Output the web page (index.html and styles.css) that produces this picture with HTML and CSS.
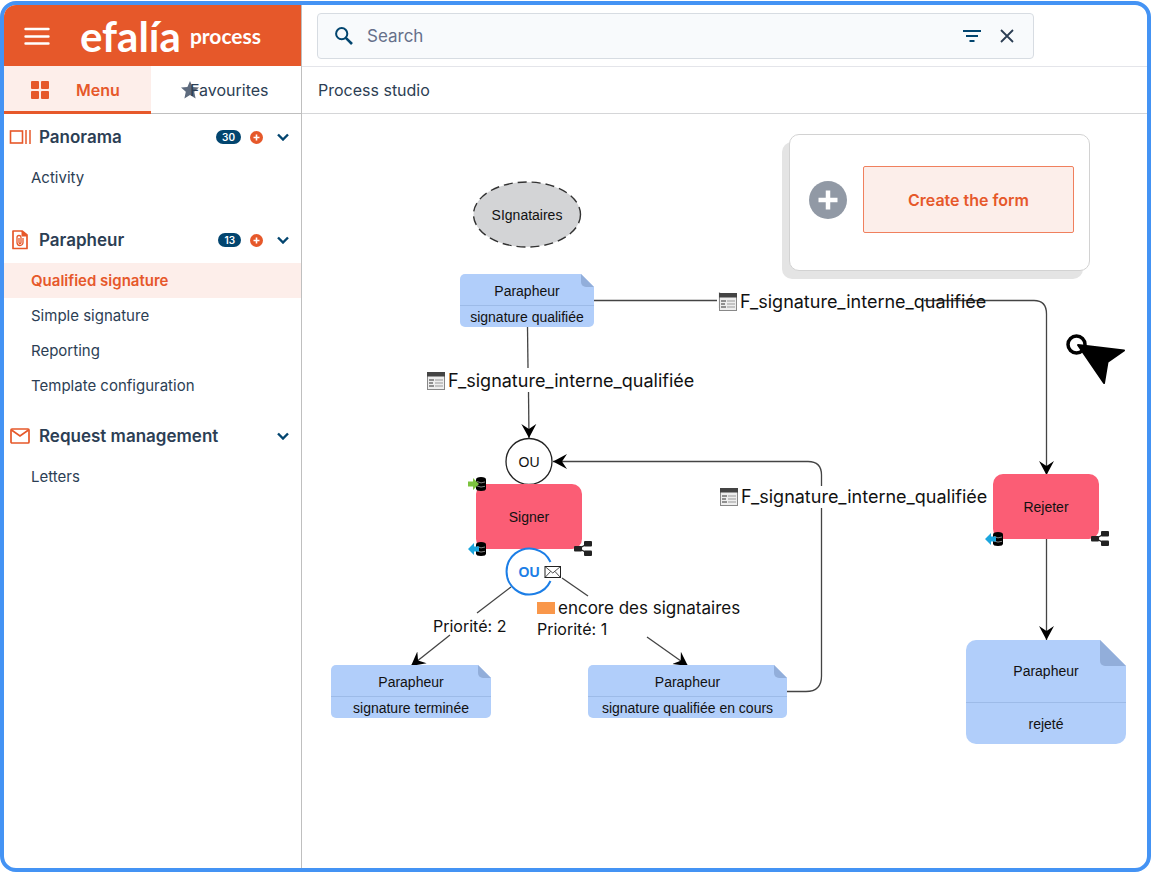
FILE: index.html
```html
<!DOCTYPE html>
<html lang="en">
<head>
  <meta charset="UTF-8">
  <title>efalia process</title>
  <link rel="stylesheet" href="styles.css">
</head>
<body>

<div class="window">
  <aside class="sidebar">
    <header class="brand">
      <button class="burger" aria-label="Open menu">
        <svg width="26" height="18" viewBox="0 0 26 18"><path d="M1.500 2H24.500M1.500 9.500H24.500M1.500 16.500H24.500" stroke="#fff" stroke-width="2.400" stroke-linecap="round"/></svg>
      </button>
      <div class="logo"><span class="logo-name">efalía</span> <span class="logo-product">process</span></div>
    </header>

    <div class="tabs">
      <button class="tab active">
        <svg width="18" height="18" viewBox="0 0 18 18" fill="#e6582a"><rect width="8" height="8" rx="1"/><rect x="10" width="8" height="8" rx="1"/><rect y="10" width="8" height="8" rx="1"/><rect x="10" y="10" width="8" height="8" rx="1"/></svg>
        <span>Menu</span>
      </button>
      <button class="tab favourites">
        <svg width="18" height="18" viewBox="0 0 18 18"><path d="M9 0l2.600 5.900 6.400.6-4.800 4.200 1.400 6.800L9 14l-5.600 3.500 1.400-6.800L0 6.500l6.400-.6z" fill="#5e6b7e"/></svg>
        <span>Favourites</span>
      </button>
    </div>

    <nav class="menu">
      <section>
        <h2>
          <svg width="22" height="22" viewBox="0 0 22 22" fill="none" stroke="#e6582a"><rect x="1.500" y="5" width="12" height="12" stroke-width="1.600"/><path d="M17 4v14M21 4v14" stroke-width="1.500"/></svg>
          <span class="title">Panorama</span>
          <span class="badge">30</span>
          <button class="add" aria-label="Add to Panorama"><svg width="13" height="13" viewBox="0 0 13 13"><circle cx="6.500" cy="6.500" r="6.500" fill="#e6582a"/><path d="M6.500 3.500v6M3.500 6.500h6" stroke="#fff" stroke-width="1.600"/></svg></button>
          <button class="toggle" aria-label="Toggle Panorama"><svg width="12" height="8" viewBox="0 0 12 8"><path d="M1 1.500l5 5 5-5" fill="none" stroke="#02456f" stroke-width="2.400"/></svg></button>
        </h2>
        <ul>
          <li><a href="#">Activity</a></li>
        </ul>
      </section>

      <section>
        <h2>
          <svg width="22" height="22" viewBox="0 0 22 22" fill="none" stroke="#e6582a" stroke-width="1.700"><path d="M4 2h9l5 4v13.500H4z" stroke-linejoin="round"/><path d="M13 2l5 5h-5z" fill="#e6582a" stroke-width="1"/><path d="M14 9v4.500a3 3 0 0 1-6 0V8.500a2 2 0 0 1 4 0v5a.9.9 0 0 1-2 0V9" stroke-width="1.300"/></svg>
          <span class="title">Parapheur</span>
          <span class="badge">13</span>
          <button class="add" aria-label="Add to Parapheur"><svg width="13" height="13" viewBox="0 0 13 13"><circle cx="6.500" cy="6.500" r="6.500" fill="#e6582a"/><path d="M6.500 3.500v6M3.500 6.500h6" stroke="#fff" stroke-width="1.600"/></svg></button>
          <button class="toggle" aria-label="Toggle Parapheur"><svg width="12" height="8" viewBox="0 0 12 8"><path d="M1 1.500l5 5 5-5" fill="none" stroke="#02456f" stroke-width="2.400"/></svg></button>
        </h2>
        <ul>
          <li><a href="#" class="current">Qualified signature</a></li>
          <li><a href="#">Simple signature</a></li>
          <li><a href="#">Reporting</a></li>
          <li><a href="#">Template configuration</a></li>
        </ul>
      </section>

      <section>
        <h2>
          <svg width="22" height="22" viewBox="0 0 22 22" fill="none" stroke="#e6582a" stroke-width="1.700"><rect x="2" y="4" width="18" height="14" rx="1"/><path d="M2.500 5l8.500 6 8.500-6"/></svg>
          <span class="title">Request management</span>
          <button class="toggle" aria-label="Toggle Request management"><svg width="12" height="8" viewBox="0 0 12 8"><path d="M1 1.500l5 5 5-5" fill="none" stroke="#02456f" stroke-width="2.400"/></svg></button>
        </h2>
        <ul>
          <li><a href="#">Letters</a></li>
        </ul>
      </section>
    </nav>
  </aside>

  <main class="content">
    <div class="topbar">
      <form class="search">
        <label for="search"><svg width="18" height="18" viewBox="0 0 18 18" fill="none" stroke="#02456f" stroke-width="2"><circle cx="6.700" cy="6.700" r="5.600"/><path d="M10.800 10.800l6.200 6.200" stroke-width="2.600"/></svg></label>
        <input type="text" id="search" placeholder="Search">
        <button type="button" aria-label="Filter"><svg width="18" height="12" viewBox="0 0 18 12"><path d="M0 1h18M3 6h12M6.500 11h5" stroke="#02456f" stroke-width="2"/></svg></button>
        <button type="reset" aria-label="Clear"><svg width="14" height="14" viewBox="0 0 14 14"><path d="M1 1l12 12M13 1L1 13" stroke="#2c3e54" stroke-width="1.800"/></svg></button>
      </form>
    </div>
    <h1 class="page-title">Process studio</h1>

    <div class="canvas">
      <!-- links between the steps -->
      <svg class="edges" width="845" height="754" viewBox="0 0 845 754">
        <defs>
          <marker id="arrow" markerUnits="userSpaceOnUse" markerWidth="16" markerHeight="16" refX="14" refY="8" orient="auto">
            <path d="M0 0.500L14 8L0 15.500L5 8z" fill="#000"/>
          </marker>
        </defs>
        <g fill="none" stroke="#444" stroke-width="1.300">
          <path d="M225.500 213L226 254"/>
          <path d="M226.500 278L227 324" marker-end="url(#arrow)"/>
          <path d="M292 186.500H415"/>
          <path d="M417.500 178V194" stroke="#bbb"/>
          <path d="M622 186.500H732Q744.500 186.500 744.500 200V361" marker-end="url(#arrow)"/>
          <path d="M744.500 425V526" marker-end="url(#arrow)"/>
          <path d="M485 577.500H504Q519.500 577.500 519.500 562V394"/>
          <path d="M519.500 372V361Q519.500 347.500 506 347.500H251" marker-end="url(#arrow)"/>
          <path d="M209 473L175 499"/>
          <path d="M148 521L109 552" marker-end="url(#arrow)"/>
          <path d="M260 464L286 482"/>
          <path d="M345 523L386 552" marker-end="url(#arrow)"/>
        </g>
        <ellipse cx="225" cy="100.500" rx="53.500" ry="32.500" fill="#d3d4d6" stroke="#333" stroke-width="1.400" stroke-dasharray="9 5"/>
        <circle cx="227" cy="347.500" r="23" fill="#fff" stroke="#222" stroke-width="1.300"/>
      </svg>

      <div class="node actor">SIgnataires</div>
      <div class="node note first"><span>Parapheur</span><span>signature qualifiée</span></div>
      <div class="node gate">OU</div>
      <div class="node task sign">Signer</div>
      <div class="node task reject">Rejeter</div>
      <div class="node note done"><span>Parapheur</span><span>signature terminée</span></div>
      <div class="node note pending"><span>Parapheur</span><span>signature qualifiée en cours</span></div>
      <div class="node note large rejected"><span>Parapheur</span><span>rejeté</span></div>

      <!-- split gate and the small markers on the tasks -->
      <svg class="edges" width="845" height="754" viewBox="0 0 845 754">
        <defs>
          <g id="db">
            <path d="M0 2.500Q0 0 5 0T10 2.500V11.500Q10 14 5 14T0 11.500z" fill="#000"/>
            <path d="M1 4.500q4 2.500 8 .5M1 9q4 2 8 .3" fill="none" stroke="#bbb" stroke-width=".7"/>
          </g>
          <g id="share">
            <path d="M5 7.500L13 3M5 7.500L13 12" stroke="#222" stroke-width="1.400"/>
            <rect y="5" width="8" height="5.500" rx="1" fill="#222"/><rect x="10" width="8" height="5.500" rx="1" fill="#222"/><rect x="10" y="9.500" width="8" height="5.500" rx="1" fill="#222"/>
          </g>
          <path id="side-arrow" d="M0 3.500h5V0l6 6-6 6V8.500H0z"/>
        </defs>
        <path d="M248.500 448A23 23 0 1 0 248.500 467" fill="#fff" stroke="#1c7ee6" stroke-width="2"/>
        <g fill="#fff" stroke="#222"><rect x="243" y="452.500" width="15.500" height="11"/><path d="M243 452.500l7.800 6.500 7.700-6.500M243 463.500l5.500-6M258.500 463.500l-5.500-6" fill="none" stroke-width=".8"/></g>
        <use href="#db" x="174" y="363"/>
        <use href="#side-arrow" x="166" y="364" fill="#7cc33f"/>
        <use href="#db" x="174" y="428"/>
        <use href="#side-arrow" transform="translate(177 429) scale(-1 1)" fill="#1ba6de"/>
        <use href="#share" x="272" y="427"/>
        <use href="#db" x="691" y="418"/>
        <use href="#side-arrow" transform="translate(694 419) scale(-1 1)" fill="#1ba6de"/>
        <use href="#share" x="789" y="417"/>
        <circle cx="774.500" cy="230.500" r="8.500" fill="none" stroke="#000" stroke-width="3.500"/>
        <path d="M776 231L822 236.500L805.500 248L802 269z" stroke="#000" stroke-width="2" stroke-linejoin="round"/>
      </svg>

      <div class="node gate split">OU</div>

      <div class="node label form form-a">
        <svg width="18" height="18" viewBox="0 0 18 18"><rect x=".5" y=".5" width="17" height="17" fill="#eee" stroke="#888"/><path d="M0 0h18v4.500H0z" fill="#444"/><path d="M2 8h5M2 11h4M2 14h5" stroke="#333" stroke-width="1.200"/><path d="M8 8h8M8 11h8M8 14h8" stroke="#999"/></svg>
        F_signature_interne_qualifiée
      </div>
      <div class="node label form form-b">
        <svg width="18" height="18" viewBox="0 0 18 18"><rect x=".5" y=".5" width="17" height="17" fill="#eee" stroke="#888"/><path d="M0 0h18v4.500H0z" fill="#444"/><path d="M2 8h5M2 11h4M2 14h5" stroke="#333" stroke-width="1.200"/><path d="M8 8h8M8 11h8M8 14h8" stroke="#999"/></svg>
        F_signature_interne_qualifiée
      </div>
      <div class="node label form form-c">
        <svg width="18" height="18" viewBox="0 0 18 18"><rect x=".5" y=".5" width="17" height="17" fill="#eee" stroke="#888"/><path d="M0 0h18v4.500H0z" fill="#444"/><path d="M2 8h5M2 11h4M2 14h5" stroke="#333" stroke-width="1.200"/><path d="M8 8h8M8 11h8M8 14h8" stroke="#999"/></svg>
        F_signature_interne_qualifiée
      </div>
      <div class="node label priority-two">Priorité: 2</div>
      <div class="node label remaining"><i class="tag"></i>encore des signataires</div>
      <div class="node label priority-one">Priorité: 1</div>

      <div class="node form-card">
        <svg width="38" height="38" viewBox="0 0 38 38"><circle cx="19" cy="19" r="19" fill="#9199a5"/><path d="M19 9.500v19M9.500 19h19" stroke="#fff" stroke-width="4.500"/></svg>
        <button class="create">Create the form</button>
      </div>
    </div>
  </main>
</div>

</body>
</html>
```
FILE: styles.css
```css
* {
  box-sizing: border-box;
}
body {
  margin: 0;
  padding: 1px 3px 0 0;
  height: 100vh;
  background: #fff;
  font-family: Inter, "Noto Sans", sans-serif;
  font-size: 16px;
  color: #2c3e54;
}
button {
  padding: 0;
  border: none;
  background: none;
  font: inherit;
  color: inherit;
  cursor: pointer;
}
svg {
  display: block;
  flex: none;
}
.window {
  display: flex;
  height: 100%;
  border: 4px solid #4493f4;
  border-radius: 16px;
  overflow: hidden;
}

/* Sidebar */
.sidebar {
  flex: none;
  width: 298px;
  border-right: 1px solid #bfbfbf;
}
.brand {
  display: flex;
  align-items: center;
  gap: 30px;
  height: 61px;
  padding-left: 20px;
  background: #e6582a;
  color: #fff;
}
.logo {
  display: flex;
  align-items: center;
  gap: 9px;
  line-height: 48px;
  font-family: Lato, sans-serif;
  font-weight: bold;
}
.logo-name {
  font-size: 42px;
}
.logo-product {
  font-size: 21px;
}
.tabs {
  display: flex;
  height: 48px;
}
.tab {
  flex: 1;
  display: flex;
  align-items: center;
  border-bottom: 1px solid #bfbfbf;
}
.tab.active {
  gap: 27px;
  padding: 2px 0 0 27px;
  border-bottom: 3px solid #e6582a;
  background: #fdeeea;
  color: #e6582a;
  font-weight: 600;
}
.favourites {
  padding-left: 30px;
}
.favourites span {
  margin-left: -9px;
}
.menu h2 {
  display: flex;
  align-items: center;
  height: 46px;
  margin: 0;
  padding: 0 12px 0 5px;
  font-size: 17px;
  font-weight: 600;
}
.title {
  flex: 1;
  margin-left: 8px;
}
.badge {
  margin-right: 9px;
  padding: 0 6px;
  border-radius: 7px;
  background: #02456f;
  color: #fff;
  font-size: 10px;
  line-height: 14px;
}
.add {
  margin-right: 14px;
}
.menu ul {
  min-height: 47px;
  margin: 0 0 10px;
  padding: 0;
  list-style: none;
}
.menu a {
  display: block;
  padding-left: 27px;
  font-size: 15px;
  line-height: 35px;
  color: inherit;
  text-decoration: none;
}
.menu a.current {
  background: #fdeeea;
  color: #e6582a;
  font-weight: 600;
}

/* Top bar */
.content {
  flex: 1;
  min-width: 0;
}
.topbar {
  height: 62px;
  padding: 8px 15px;
  border-bottom: 1px solid #e4e5ea;
}
.search {
  display: flex;
  align-items: center;
  max-width: 717px;
  height: 46px;
  padding: 0 19px 0 17px;
  border: 1px solid #d7dce2;
  border-radius: 4px;
  background: #f8fafc;
}
.search input {
  flex: 1;
  min-width: 0;
  padding: 0 14px;
  border: none;
  outline: none;
  background: none;
  font: inherit;
  font-size: 17px;
}
.search input::placeholder {
  color: #66708a;
}
.search button + button {
  margin-left: 19px;
}
.page-title {
  margin: 0;
  padding-left: 16px;
  border-bottom: 1px solid #d5d6d8;
  font-size: 16px;
  font-weight: normal;
  line-height: 46px;
}

/* Diagram */
.canvas {
  position: relative;
  height: 754px;
}
.edges {
  position: absolute;
  top: 0;
  left: 0;
}
.node {
  position: absolute;
  color: #111;
  font-family: "Liberation Sans", Arial, sans-serif;
  font-size: 14px;
  text-align: center;
}
.actor {
  left: 171px;
  top: 67px;
  width: 108px;
  line-height: 69px;
}
.gate {
  left: 204px;
  top: 324px;
  width: 46px;
  line-height: 48px;
}
.gate.split {
  top: 434px;
  color: #1c7ee6;
  font-weight: bold;
}
.task {
  width: 106px;
  height: 65px;
  border-radius: 10px;
  background: #fb5d75;
  line-height: 67px;
}
.sign {
  left: 174px;
  top: 370px;
}
.reject {
  left: 691px;
  top: 360px;
}
.note {
  --fold: 13px;
  display: flex;
  flex-direction: column;
  height: 53px;
  border-radius: 5px;
  background: #b1cefa;
  clip-path: polygon(0 0, calc(100% - var(--fold)) 0, 100% var(--fold), 100% 100%, 0 100%);
}
.note::after {
  content: "";
  position: absolute;
  top: 0;
  right: 0;
  width: var(--fold);
  height: var(--fold);
  border-bottom-left-radius: 5px;
  background: #92aeda;
}
.note span {
  line-height: 23px;
}
.note span:first-child {
  height: 32px;
  border-bottom: 1px solid #9dbbe8;
  line-height: 34px;
}
.note.large {
  --fold: 26px;
  height: 104px;
  border-radius: 10px;
}
.note.large span {
  line-height: 42px;
}
.note.large span:first-child {
  height: 63px;
  line-height: 62px;
}
.first {
  left: 158px;
  top: 160px;
  width: 134px;
}
.done {
  left: 29px;
  top: 551px;
  width: 160px;
}
.pending {
  left: 286px;
  top: 551px;
  width: 199px;
}
.rejected {
  left: 664px;
  top: 526px;
  width: 160px;
}
.label {
  display: flex;
  align-items: center;
  gap: 3px;
  font-family: Inter, "Noto Sans", sans-serif;
  font-size: 16px;
  line-height: 22px;
  white-space: nowrap;
}
.form {
  font-size: 18px;
}
.form-a {
  left: 125px;
  top: 256px;
}
.form-b {
  left: 417px;
  top: 177px;
}
.form-c {
  left: 418px;
  top: 372px;
}
.priority-two {
  left: 131px;
  top: 501px;
}
.remaining {
  left: 235px;
  top: 483px;
  font-size: 17px;
}
.priority-one {
  left: 235px;
  top: 504px;
}
.tag {
  width: 18px;
  height: 12px;
  background: #f9974a;
}
.form-card {
  left: 487px;
  top: 20px;
  display: flex;
  align-items: center;
  gap: 16px;
  width: 301px;
  height: 137px;
  padding: 0 15px 6px 19px;
  border: 1px solid #d2d2d2;
  border-radius: 10px;
  background: #fff;
  box-shadow: -7px 8px 0 #e4e4e4;
}
.create {
  flex: 1;
  height: 67px;
  border: 1px solid #f0805e;
  border-radius: 2px;
  background: #fceeea;
  color: #e6582a;
  font-family: Inter, "Noto Sans", sans-serif;
  font-size: 16px;
  font-weight: 600;
}
```
